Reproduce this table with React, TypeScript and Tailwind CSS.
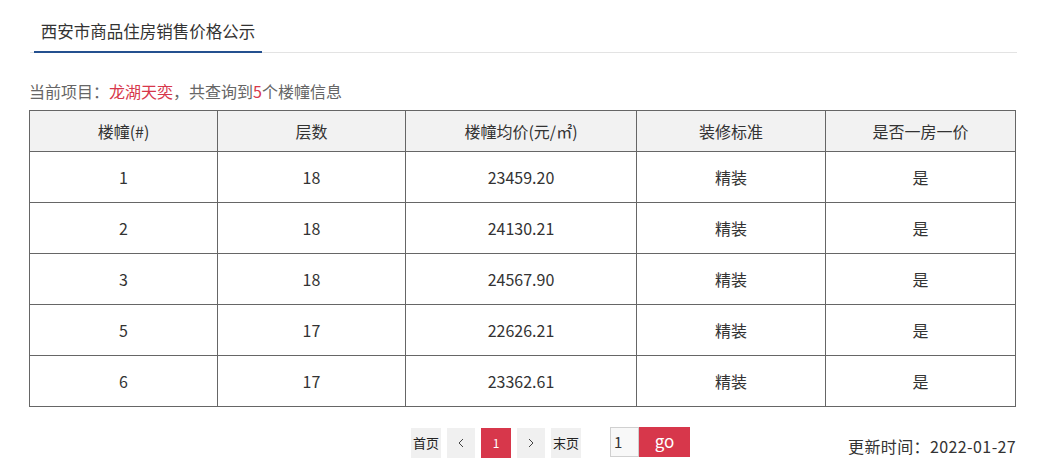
import React from "react";

const rows = [
  ["1", "18", "23459.20", "精装", "是"],
  ["2", "18", "24130.21", "精装", "是"],
  ["3", "18", "24567.90", "精装", "是"],
  ["5", "17", "22626.21", "精装", "是"],
  ["6", "17", "23362.61", "精装", "是"],
];

const headers = ["楼幢(#)", "层数", "楼幢均价(元/㎡)", "装修标准", "是否一房一价"];
const widths = ["w-[188px]", "w-[188px]", "w-[231px]", "w-[189px]", "w-[190px]"];

function Chevron({ dir }: { dir: "l" | "r" }) {
  return (
    <svg width="6" height="10" viewBox="0 0 6 10" fill="none" stroke="#444" strokeWidth="1">
      {dir === "l" ? <polyline points="5,1 1,5 5,9" /> : <polyline points="1,1 5,5 1,9" />}
    </svg>
  );
}

export default function App() {
  return (
    <div
      className="w-[1055px] h-[470px] bg-white text-[#333] overflow-hidden"
      style={{ fontFamily: '"Noto Sans CJK SC", "Noto Sans", sans-serif' }}
    >
      <div className="ml-[30px] w-[987px] h-[53px] border-b border-[#e3e3e3] flex">
        <div className="ml-[4px] w-[228px] h-[53px] pt-[12px] border-b-2 border-[#24508f] flex items-center justify-center text-[16.5px] text-[#333] leading-none">
          西安市商品住房销售价格公示
        </div>
      </div>

      <div className="ml-[29px] mt-[26px] h-[24px] leading-[24px] text-[16px] text-[#666]">
        当前项目：<span className="text-[#d7374b]">龙湖天奕</span>，共查询到
        <span className="text-[#d7374b]">5</span>个楼幢信息
      </div>

      <table className="ml-[29px] mt-[7px] w-[986px] border-collapse table-fixed text-[16px] text-[#333]">
        <colgroup>
          {widths.map((w, i) => (
            <col key={i} className={w} />
          ))}
        </colgroup>
        <thead>
          <tr className="h-[41px] bg-[#f2f2f2]">
            {headers.map((h) => (
              <th key={h} className="border border-[#666] font-normal text-center p-0">
                {h}
              </th>
            ))}
          </tr>
        </thead>
        <tbody>
          {rows.map((r, i) => (
            <tr key={i} className="h-[51px]">
              {r.map((c, j) => (
                <td key={j} className="border border-[#666] text-center p-0">
                  {c}
                </td>
              ))}
            </tr>
          ))}
        </tbody>
      </table>

      <div className="flex items-start mt-[20px]">
        <div className="ml-[411px] flex items-start">
          <div className="mt-[1px] flex gap-[6px] text-[13px]">
            <div className="w-[30px] h-[30px] bg-[#f0f0f0] flex items-center justify-center text-[#222]">首页</div>
            <div className="w-[28px] h-[30px] bg-[#f0f0f0] flex items-center justify-center">
              <Chevron dir="l" />
            </div>
            <div className="w-[30px] h-[30px] bg-[#d7374b] flex items-center justify-center text-white text-[12px]">1</div>
            <div className="w-[28px] h-[30px] bg-[#f0f0f0] flex items-center justify-center">
              <Chevron dir="r" />
            </div>
            <div className="w-[30px] h-[30px] bg-[#f0f0f0] flex items-center justify-center text-[#222]">末页</div>
          </div>
          <div className="ml-[29px] flex">
            <div className="w-[29px] h-[30px] border border-[#d0d0d0] bg-[#f8f8f8] flex items-center pl-[3px] text-[15px] text-[#333]">1</div>
            <div className="w-[51px] h-[30px] bg-[#d7374b] flex items-center justify-center text-white text-[17px] pb-[2px]">go</div>
          </div>
        </div>
        <div className="ml-[158px] mt-[7px] h-[24px] leading-[24px] text-[16px] tracking-[0.4px] text-[#333]">
          更新时间：2022-01-27
        </div>
      </div>
    </div>
  );
}
